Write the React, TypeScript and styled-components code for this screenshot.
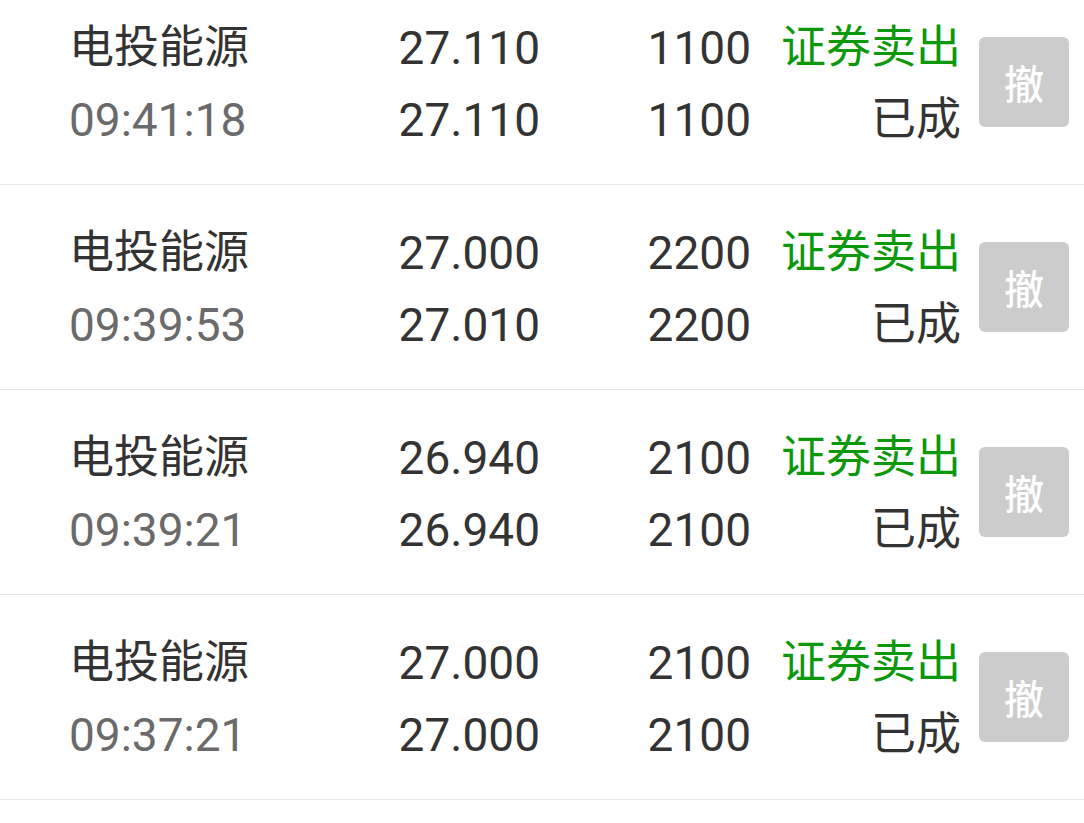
import React from "react";
import styled, { createGlobalStyle } from "styled-components";

const GlobalStyle = createGlobalStyle`
  html, body {
    margin: 0;
    padding: 0;
    background: #ffffff;
    overflow: hidden;
  }
  body {
    font-family: Roboto, "Noto Sans CJK SC", sans-serif;
  }
`;

const List = styled.div`
  display: flex;
  flex-direction: column;
  margin-top: -20px;
`;

const Row = styled.div`
  display: grid;
  grid-template-columns: 243px 228px 211px 210px 90px;
  grid-template-rows: 72px 72px;
  align-content: center;
  align-items: center;
  height: 200px;
  padding: 4px 0 0 69px;
  border-bottom: 1px solid #e8e8e8;
  box-sizing: content-box;
`;

const Cell = styled.div<{ $align?: "left" | "right"; $tone?: "main" | "sub" | "green" }>`
  font-size: 46px;
  line-height: 72px;
  white-space: nowrap;
  text-align: ${(p) => (p.$align === "right" ? "right" : "left")};
  color: ${(p) =>
    p.$tone === "sub" ? "#6a6a6a" : p.$tone === "green" ? "#0b980b" : "#333333"};
`;

const CjkCell = styled(Cell)`
  font-size: 45px;
`;

const CancelButton = styled.button`
  grid-column: 5;
  grid-row: 1 / span 2;
  margin-left: 18px;
  margin-top: -4px;
  width: 90px;
  height: 90px;
  border: none;
  border-radius: 6px;
  background: #cccccc;
  color: #ffffff;
  font-family: "Noto Sans CJK SC", sans-serif;
  font-weight: 500;
  font-size: 40px;
  padding: 0;
  display: flex;
  align-items: center;
  justify-content: center;
`;

type Order = {
  name: string;
  time: string;
  price: string;
  dealPrice: string;
  qty: string;
  dealQty: string;
  side: string;
  status: string;
};

const orders: Order[] = [
  { name: "电投能源", time: "09:41:18", price: "27.110", dealPrice: "27.110", qty: "1100", dealQty: "1100", side: "证券卖出", status: "已成" },
  { name: "电投能源", time: "09:39:53", price: "27.000", dealPrice: "27.010", qty: "2200", dealQty: "2200", side: "证券卖出", status: "已成" },
  { name: "电投能源", time: "09:39:21", price: "26.940", dealPrice: "26.940", qty: "2100", dealQty: "2100", side: "证券卖出", status: "已成" },
  { name: "电投能源", time: "09:37:21", price: "27.000", dealPrice: "27.000", qty: "2100", dealQty: "2100", side: "证券卖出", status: "已成" },
];

export default function App() {
  return (
    <>
      <GlobalStyle />
      <List>
        {orders.map((o, i) => (
          <Row key={i}>
            <CjkCell>{o.name}</CjkCell>
            <Cell $align="right">{o.price}</Cell>
            <Cell $align="right">{o.qty}</Cell>
            <CjkCell $align="right" $tone="green">{o.side}</CjkCell>
            <CancelButton>撤</CancelButton>
            <Cell $tone="sub">{o.time}</Cell>
            <Cell $align="right">{o.dealPrice}</Cell>
            <Cell $align="right">{o.dealQty}</Cell>
            <CjkCell $align="right">{o.status}</CjkCell>
          </Row>
        ))}
      </List>
    </>
  );
}
